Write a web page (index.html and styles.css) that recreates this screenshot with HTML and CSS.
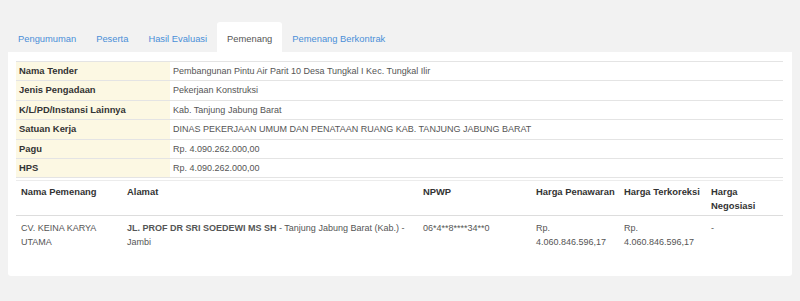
FILE: index.html
```html
<!DOCTYPE html>
<html lang="id">
<head>
    <meta charset="UTF-8">
    <meta name="viewport" content="width=device-width, initial-scale=1.0">
    <title>Pemenang</title>
    <link rel="stylesheet" href="styles.css">
</head>
<body>
    <!-- tab navigasi -->
    <ul class="nav-tabs">
        <li><a href="#">Pengumuman</a></li>
        <li><a href="#">Peserta</a></li>
        <li><a href="#">Hasil Evaluasi</a></li>
        <li class="active"><a href="#">Pemenang</a></li>
        <li><a href="#">Pemenang Berkontrak</a></li>
    </ul>

    <div class="tab-content">
        <table class="info-table">
            <tr><th>Nama Tender</th><td>Pembangunan Pintu Air Parit 10 Desa Tungkal I Kec. Tungkal Ilir</td></tr>
            <tr><th>Jenis Pengadaan</th><td>Pekerjaan Konstruksi</td></tr>
            <tr><th>K/L/PD/Instansi Lainnya</th><td>Kab. Tanjung Jabung Barat</td></tr>
            <tr><th>Satuan Kerja</th><td>DINAS PEKERJAAN UMUM DAN PENATAAN RUANG KAB. TANJUNG JABUNG BARAT</td></tr>
            <tr><th>Pagu</th><td>Rp. 4.090.262.000,00</td></tr>
            <tr><th>HPS</th><td>Rp. 4.090.262.000,00</td></tr>
        </table>

        <table class="winner-table">
            <colgroup>
                <col class="col-nama">
                <col class="col-alamat">
                <col class="col-npwp">
                <col class="col-penawaran">
                <col class="col-terkoreksi">
                <col>
            </colgroup>
            <thead>
                <tr>
                    <th>Nama Pemenang</th>
                    <th>Alamat</th>
                    <th>NPWP</th>
                    <th>Harga Penawaran</th>
                    <th>Harga Terkoreksi</th>
                    <th>Harga Negosiasi</th>
                </tr>
            </thead>
            <tbody>
                <tr>
                    <td>CV. KEINA KARYA UTAMA</td>
                    <td><b>JL. PROF DR SRI SOEDEWI MS SH</b> - Tanjung Jabung Barat (Kab.) - Jambi</td>
                    <td>06*4**8****34**0</td>
                    <td>Rp. 4.060.846.596,17</td>
                    <td>Rp. 4.060.846.596,17</td>
                    <td>-</td>
                </tr>
            </tbody>
        </table>
    </div>
</body>
</html>
```

FILE: styles.css
```css
body {
    margin: 0;
    padding: 22px 8px 0;
    background-color: #f2f2f2;
    font-family: "Liberation Sans", Arial, sans-serif;
    font-size: 9px;
    color: #333;
}

/* tab navigasi */
.nav-tabs {
    display: flex;
    margin: 0;
    padding: 0;
    list-style: none;
    font-size: 9.35px;
}
.nav-tabs li a {
    display: block;
    padding: 11px 10px 7px;
    line-height: 12px;
    color: #4a8fd8;
    text-decoration: none;
    border-radius: 3px 3px 0 0;
}
.nav-tabs li.active a {
    background-color: #fff;
    color: #555;
}

.tab-content {
    background-color: #fff;
    padding: 9px 9px 24px 8px;
    border-radius: 0 0 3px 3px;
}

table {
    width: 100%;
    border-collapse: collapse;
}

/* tabel informasi tender */
.info-table th,
.info-table td {
    padding: 3px 5px 3px 3px;
    line-height: 12.4px;
    border-top: 1px solid #e4e4e4;
    border-bottom: 1px solid #e4e4e4;
    text-align: left;
}
.info-table th {
    width: 146px;
    background-color: #fcf8e3;
    font-weight: bold;
    font-size: 9.4px;
    color: #333;
}
.info-table td {
    color: #555;
}

/* tabel pemenang */
.winner-table {
    table-layout: fixed;
    margin-top: 2px;
    border-top: 1px solid #ececec;
}
.winner-table th,
.winner-table td {
    text-align: left;
    vertical-align: top;
    line-height: 13.4px;
    padding: 4px 1px 3px 5px;
}
.winner-table th {
    font-weight: bold;
    font-size: 9.4px;
    color: #333;
    border-bottom: 1px solid #ddd;
}
.winner-table td {
    color: #555;
    padding-top: 6px;
}
.col-nama { width: 106px; }
.col-alamat { width: 296px; }
.col-npwp { width: 113px; }
.col-penawaran { width: 88px; }
.col-terkoreksi { width: 87px; }
```
